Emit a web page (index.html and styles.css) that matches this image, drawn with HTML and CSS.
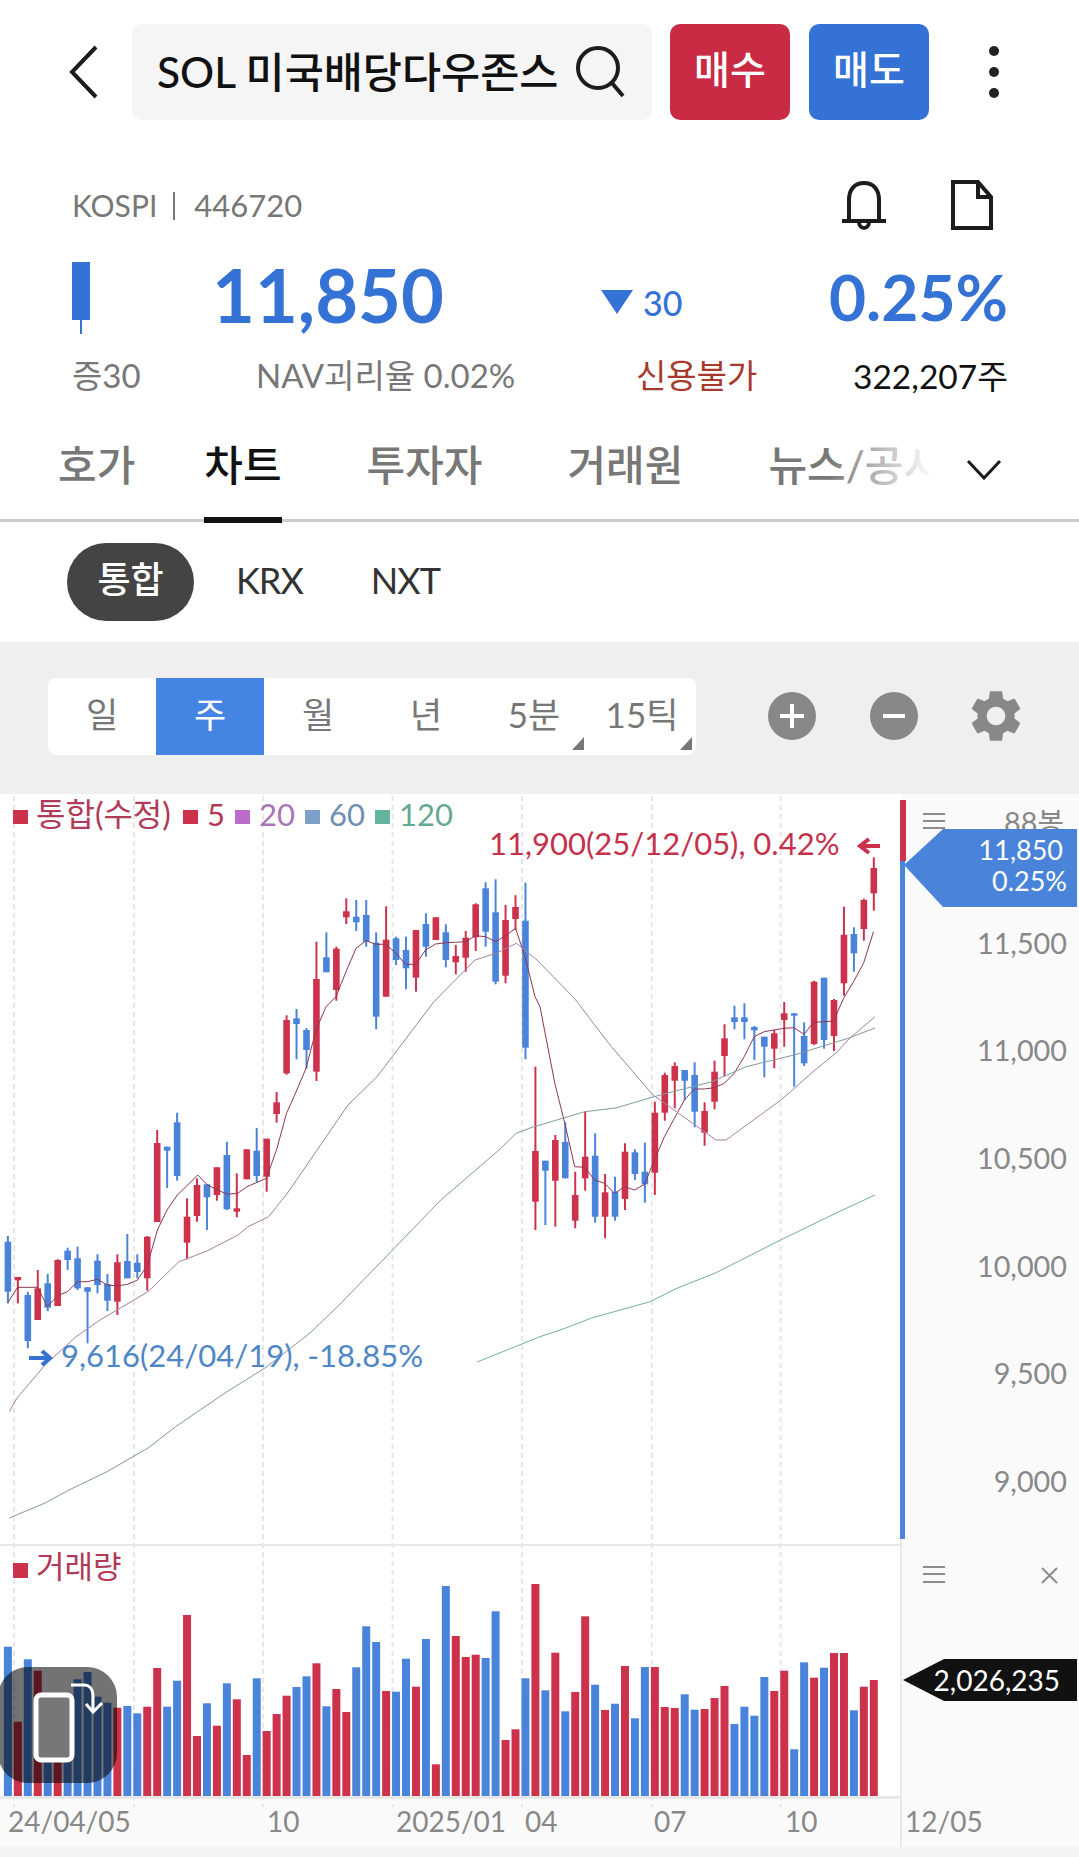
FILE: index.html
```html
<!DOCTYPE html>
<html lang="ko">
<head>
    <meta charset="UTF-8">
    <title>SOL 미국배당다우존스</title>
    <link rel="stylesheet" href="styles.css">
</head>
<body>

<div class="top">
    <svg class="back" width="32" height="56" viewBox="0 0 32 56"><path d="M28 3 L4 28 L28 53"/></svg>
    <div class="search">
        <span class="search-name">SOL 미국배당다우존스</span>
        <svg class="search-icon" width="52" height="56" viewBox="0 0 52 56"><circle cx="24" cy="24" r="20"/><path d="M38 39 L49 52"/></svg>
    </div>
    <a class="trade buy">매수</a>
    <a class="trade sell">매도</a>
    <div class="more"><i></i><i></i><i></i></div>
</div>

<div class="info">
    <div class="info-code">
        <span class="code">KOSPI<b></b><em>446720</em></span>
        <svg class="bell" width="50" height="50" viewBox="0 0 50 50"><path d="M10 41 V20 C10 9 16 3 25 3 C34 3 40 9 40 20 V41"/><path d="M3 41 H47"/><path d="M20 42 C20 50 30 50 30 42"/></svg>
        <svg class="doc" width="42" height="50" viewBox="0 0 42 50"><path d="M2 2 H27 L40 17 V48 H2 Z"/><path d="M27 2 V17 H40"/></svg>
    </div>
    <div class="info-price">
        <div class="mark"><i></i></div>
        <span class="price">11,850</span>
        <span class="diff"><i></i>30</span>
        <span class="rate">0.25%</span>
    </div>
    <div class="info-sub">
        <span class="sub-vol">증30</span>
        <span class="sub-nav">NAV괴리율 0.02%</span>
        <span class="sub-credit">신용불가</span>
        <span class="sub-qty">322,207주</span>
    </div>
</div>

<div class="tabs">
    <a class="tab">호가</a>
    <a class="tab on">차트</a>
    <a class="tab">투자자</a>
    <a class="tab">거래원</a>
    <a class="tab fade">뉴스/공시</a>
    <svg class="tab-more" width="36" height="22" viewBox="0 0 36 22"><path d="M2 2 L18 19 L34 2"/></svg>
</div>

<div class="market">
    <span class="market-on">통합</span>
    <span class="market-item">KRX</span>
    <span class="market-item">NXT</span>
</div>

<div class="period">
    <div class="period-list">
        <span>일</span>
        <span class="on">주</span>
        <span>월</span>
        <span>년</span>
        <span class="corner">5분</span>
        <span class="corner">15틱</span>
    </div>
    <svg class="tool" width="50" height="50" viewBox="0 0 50 50"><circle cx="25" cy="25" r="24"/><path d="M25 13 V37 M13 25 H37"/></svg>
    <svg class="tool" width="50" height="50" viewBox="0 0 50 50"><circle cx="25" cy="25" r="24"/><path d="M14 25 H36"/></svg>
    <svg class="gear" width="62" height="62" viewBox="0 0 24 24"><path d="M19.14 12.94c.04-.3.06-.61.06-.94 0-.32-.02-.64-.07-.94l2.03-1.58a.49.49 0 0 0 .12-.61l-1.92-3.32a.488.488 0 0 0-.59-.22l-2.39.96c-.5-.38-1.03-.7-1.62-.94l-.36-2.54a.484.484 0 0 0-.48-.41h-3.84c-.24 0-.43.17-.47.41l-.36 2.54c-.59.24-1.13.57-1.62.94l-2.39-.96c-.22-.08-.47 0-.59.22L2.74 8.87c-.12.21-.08.47.12.61l2.03 1.58c-.05.3-.09.63-.09.94s.02.64.07.94l-2.03 1.58a.49.49 0 0 0-.12.61l1.92 3.32c.12.22.37.29.59.22l2.39-.96c.5.38 1.03.7 1.62.94l.36 2.54c.05.24.24.41.48.41h3.84c.24 0 .44-.17.47-.41l.36-2.54c.59-.24 1.13-.56 1.62-.94l2.39.96c.22.08.47 0 .59-.22l1.92-3.32c.12-.22.07-.47-.12-.61l-2.01-1.58zM12 15.6c-1.98 0-3.6-1.62-3.6-3.6s1.62-3.6 3.6-3.6 3.6 1.62 3.6 3.6-1.62 3.6-3.6 3.6z"/></svg>
</div>

<svg class="chart" width="1079" height="1063" viewBox="0 794 1079 1063">
    <rect class="bg-plot" x="0" y="794" width="902" height="1002"/>
    <rect class="bg-axis" x="902" y="794" width="177" height="1053"/>
    <rect class="bg-axis" x="0" y="1798" width="902" height="49"/>
    <rect class="rule" x="0" y="1544" width="900" height="2"/>
    <rect class="rule" x="0" y="1796" width="900" height="3"/>
    <rect class="rule" x="900" y="1540" width="2" height="307"/>

    <g id="grid"></g>
    <g id="bars"></g>
    <g id="candles"></g>
    <g id="lines"></g>

    <!-- 가격 범례 -->
    <rect class="up" x="13" y="810" width="15" height="14"/>
    <text class="legend-ko c-red" x="36" y="826">통합(수정)</text>
    <rect class="up" x="183" y="810" width="15" height="14"/>
    <text class="legend c-red" x="207" y="826">5</text>
    <rect class="s-purple" x="235" y="810" width="15" height="14"/>
    <text class="legend c-purple" x="259" y="826">20</text>
    <rect class="s-blue" x="305" y="810" width="15" height="14"/>
    <text class="legend c-blue" x="329" y="826">60</text>
    <rect class="s-green" x="375" y="810" width="15" height="14"/>
    <text class="legend c-green" x="399" y="826">120</text>

    <text class="note c-high" x="489" y="855">11,900(25/12/05), 0.42%</text>
    <path class="arrow-high" d="M880 846 H860 M869 839 L860 846 L869 853"/>
    <path class="arrow-low" d="M29 1358 H50 M42 1351 L50 1358 L42 1365"/>
    <text class="note c-low" x="61" y="1367">9,616(24/04/19), -18.85%</text>

    <rect class="up" x="13" y="1563" width="15" height="15"/>
    <text class="legend c-red" x="36" y="1578">거래량</text>

    <!-- 오른쪽 축 -->
    <rect class="up" x="900" y="800" width="6" height="61"/>
    <rect class="down" x="900" y="861" width="5" height="678"/>
    <path class="menu" d="M923 814 H945 M923 821 H945 M923 828 H945"/>
    <text class="axis-text" x="1064" y="833">88봉</text>
    <path class="down" d="M904 865 L943 829 H1077 V907 H943 Z"/>
    <text class="tag" x="1063" y="860">11,850</text>
    <text class="tag" x="1067" y="891">0.25%</text>

    <text class="axis-text" x="1067" y="954">11,500</text>
    <text class="axis-text" x="1067" y="1061">11,000</text>
    <text class="axis-text" x="1067" y="1169">10,500</text>
    <text class="axis-text" x="1067" y="1277">10,000</text>
    <text class="axis-text" x="1067" y="1384">9,500</text>
    <text class="axis-text" x="1067" y="1492">9,000</text>

    <path class="menu" d="M923 1567 H945 M923 1574 H945 M923 1582 H945"/>
    <path class="menu" d="M1042 1568 L1057 1583 M1057 1568 L1042 1583"/>
    <path class="tag-black" d="M903 1680 L944 1659 H1077 V1701 H944 Z"/>
    <text class="tag-vol" x="1060" y="1691">2,026,235</text>

    <!-- 날짜 -->
    <text class="date" x="8" y="1832">24/04/05</text>
    <text class="date" x="267" y="1832">10</text>
    <text class="date" x="396" y="1832">2025/01</text>
    <text class="date" x="525" y="1832">04</text>
    <text class="date" x="654" y="1832">07</text>
    <text class="date" x="785" y="1832">10</text>
    <text class="date" x="905" y="1832">12/05</text>

    <!-- 화면 회전 버튼 -->
    <rect class="rotate" x="-2" y="1667" width="119" height="116" rx="30"/>
    <rect class="rotate-phone" x="36" y="1695" width="36" height="65" rx="5"/>
    <path class="rotate-arrow" d="M71 1685 H84 C90 1685 93 1690 93 1696 V1712 M86 1704 L93 1712 L102 1703"/>
</svg>

<script src="chart.js"></script>
</body>
</html>
```

FILE: styles.css
```css
html,body,div,span,a{margin:0;padding:0;}
body {
    width: 1079px;
    height: 1857px;
    overflow: hidden;
    background: #f4f4f4;
    font-family: Lato, "Noto Sans CJK KR", sans-serif;
    color: #111;
}
svg {
    display: block;
}
.back path, .search-icon circle, .search-icon path, .bell path, .doc path, .tab-more path {
    fill: none;
    stroke: #1c1c1c;
    stroke-width: 4;
}
.tab-more path {
    stroke-width: 3;
}

/* top bar */
.top {
    display: flex;
    align-items: center;
    height: 96px;
    padding-top: 24px;
    background: #fff;
}
.back {
    margin-left: 68px;
}
.search {
    display: flex;
    align-items: center;
    justify-content: space-between;
    box-sizing: border-box;
    width: 520px;
    height: 96px;
    margin-left: 32px;
    padding: 0 26px 0 25px;
    border-radius: 10px;
    background: #f5f5f5;
}
.search-name {
    margin-bottom: 6px;
    font-size: 42.5px;
    font-weight: 500;
    white-space: nowrap;
    color: #111;
}
.trade {
    width: 120px;
    height: 96px;
    line-height: 90px;
    text-align: center;
    border-radius: 10px;
    color: #fff;
    font-size: 39px;
    font-weight: 500;
}
.buy {
    margin-left: 18px;
    background: #c92a44;
}
.sell {
    margin-left: 19px;
    background: #3572d6;
}
.more {
    margin-left: 60px;
}
.more i {
    display: block;
    width: 10px;
    height: 10px;
    margin: 11px 0;
    border-radius: 5px;
    background: #222;
}

/* stock info */
.info {
    box-sizing: border-box;
    height: 293px;
    padding: 60px 71px 0 72px;
    background: #fff;
}
.info-code {
    display: flex;
    align-items: center;
    height: 50px;
}
.code {
    flex: 1;
    font-size: 30px;
    color: #777;
}
.code em {
    font-style: normal;
    font-size: 31px;
}
.code b {
    display: inline-block;
    width: 2px;
    height: 28px;
    margin: 0 19px 0 16px;
    vertical-align: -3px;
    background: #777;
}
.bell {
    margin-right: 62px;
}
.doc {
    margin-right: 15px;
}
.info-price {
    display: flex;
    align-items: center;
    height: 72px;
    margin-top: 28px;
}
.mark {
    position: relative;
    width: 18px;
    height: 58px;
    margin: -6px 0 0;
    background: #3572d6;
}
.mark i {
    position: absolute;
    left: 8px;
    top: 58px;
    width: 2px;
    height: 14px;
    background: #3572d6;
}
.price {
    width: 389px;
    margin-left: 122px;
    font-size: 74px;
    font-weight: 700;
    color: #3572d6;
}
.diff {
    width: 220px;
    margin-top: 16px;
    font-size: 34px;
    font-weight: 500;
    color: #3572d6;
}
.diff i {
    display: inline-block;
    width: 0;
    height: 0;
    margin-right: 10px;
    border-left: 16px solid transparent;
    border-right: 16px solid transparent;
    border-top: 24px solid #3572d6;
    vertical-align: 2px;
}
.rate {
    flex: 1;
    margin-top: 4px;
    text-align: right;
    font-size: 64px;
    font-weight: 700;
    color: #3572d6;
}
.info-sub {
    display: flex;
    align-items: center;
    height: 44px;
    margin-top: 22px;
    font-size: 33px;
    white-space: nowrap;
}
.sub-vol {
    width: 184px;
    color: #777;
}
.sub-nav {
    width: 380px;
    color: #777;
}
.sub-credit {
    flex: 1;
    color: #a63a2e;
}
.sub-qty {
    color: #111;
    font-size: 33.5px;
}

/* tabs */
.tabs {
    position: relative;
    display: flex;
    align-items: center;
    height: 109px;
    padding: 0 0 8px 58px;
    border-bottom: 3px solid #ccc;
    box-sizing: border-box;
    background: #fff;
    white-space: nowrap;
    font-size: 42px;
    color: #777;
    font-weight: 500;
}
.tab {
    position: relative;
    margin-right: 85px;
}
.tab:first-child {
    margin-right: 69px;
}
.tab.on {
    color: #111;
}
.tab.on:after {
    content: "";
    position: absolute;
    left: 0;
    right: 0;
    top: 85px;
    height: 6px;
    background: #111;
}
.tab.fade {
    width: 166px;
    overflow: hidden;
    margin: 0;
}
.tab.fade:after {
    content: "";
    position: absolute;
    left: 60px;
    top: 0;
    width: 106px;
    height: 100%;
    background: linear-gradient(to right, rgba(255,255,255,0), #fff);
}
.tab-more {
    position: absolute;
    left: 966px;
    top: 46px;
}

/* market switch */
.market {
    display: flex;
    align-items: center;
    height: 120px;
    padding-left: 67px;
    background: #fff;
    font-size: 36px;
    color: #333;
}
.market-on {
    width: 127px;
    height: 78px;
    line-height: 72px;
    text-align: center;
    border-radius: 39px;
    background: #444;
    color: #fff;
    font-size: 36px;
    font-weight: 500;
}
.market-item {
    margin: 0 26px 4px 42px;
    letter-spacing: -1px;
}

/* period bar */
.period {
    display: flex;
    align-items: center;
    box-sizing: border-box;
    height: 152px;
    padding: 0 0 4px 48px;
    background: #efefef;
}
.period-list {
    display: flex;
    height: 77px;
    border-radius: 8px;
    overflow: hidden;
    background: #fff;
    font-size: 35px;
    color: #777;
}
.period-list span {
    position: relative;
    width: 108px;
    line-height: 72px;
    text-align: center;
}
.period-list .on {
    background: #4485e3;
    color: #fff;
}
.period-list .corner:after {
    content: "";
    position: absolute;
    right: 4px;
    bottom: 5px;
    width: 0;
    height: 0;
    border-left: 12px solid transparent;
    border-bottom: 13px solid #777;
}
.tool circle {
    fill: #888;
}
.tool path {
    fill: none;
    stroke: #fff;
    stroke-width: 4;
}
.tool {
    margin-right: 52px;
}
.tool:nth-child(2) {
    margin-left: 71px;
}
.gear {
    margin-left: -6px;
    fill: #888;
}

/* chart */
.bg-plot {
    fill: #fff;
}
.bg-axis {
    fill: #fafafa;
}
.rule {
    fill: #e8e8e8;
}
.gridline {
    stroke: #e6e6e6;
    stroke-width: 2;
    stroke-dasharray: 5 4;
}
.up {
    fill: #cd324c;
}
.down {
    fill: #4a84da;
}
.wick-up {
    stroke: #cd324c;
    stroke-width: 2;
}
.wick-down {
    stroke: #4a84da;
    stroke-width: 2;
}
.ma {
    fill: none;
    stroke-width: 1;
}
.ma5 {
    stroke: #8f3550;
}
.ma20 {
    stroke: #a5809f;
}
.ma60 {
    stroke: #7f9a9f;
}
.ma120 {
    stroke: #74ae9c;
}
.legend {
    font-size: 31px;
}
.legend-ko {
    font-size: 32px;
}
.note {
    font-size: 31px;
}
.c-red {
    fill: #b03a58;
}
.c-purple {
    fill: #a875b8;
}
.c-blue {
    fill: #6f8fb5;
}
.c-green {
    fill: #63a892;
}
.c-high {
    fill: #c5314b;
}
.c-low {
    fill: #4f86c6;
}
.s-purple {
    fill: #bb6bc9;
}
.s-blue {
    fill: #7da0c8;
}
.s-green {
    fill: #63b39f;
}
.arrow-high, .arrow-low {
    fill: none;
    stroke-width: 4;
}
.arrow-high {
    stroke: #cd324c;
}
.arrow-low {
    stroke: #3572d6;
}
.axis-text {
    font-size: 28.8px;
    fill: #888;
    text-anchor: end;
}
.menu {
    fill: none;
    stroke: #8c8c8c;
    stroke-width: 2;
}
.tag {
    font-size: 27px;
    fill: #fff;
    text-anchor: end;
}
.tag-vol {
    font-size: 28px;
    fill: #fff;
    text-anchor: end;
}
.tag-black {
    fill: #111;
}
.date {
    font-size: 28px;
    fill: #888;
}
.rotate {
    fill: rgba(0,0,0,0.55);
}
.rotate-phone {
    fill: #777;
    stroke: #fff;
    stroke-width: 5;
}
.rotate-arrow {
    fill: none;
    stroke: #fff;
    stroke-width: 3;
}
```

FILE: chart.js
```js
window.onload = function () {
    var NS = 'http://www.w3.org/2000/svg';
    var BASE = 1796;

    // 양봉여부, 몸통 위/아래, 꼬리 위/아래, 거래량 top (화면 y좌표)
    var data = [
        [0,1241.7,1291.7,1236,1303.3,1646.7],[1,1277,1280.3,1277,1303.3,1721.7],[0,1295,1341,1291.7,1348.3,1659.3],[1,1288.3,1320,1270,1320,1670.7],
        [0,1283.3,1307.7,1274,1311,1707],[1,1260,1306,1259.3,1306,1713],[0,1250.7,1260,1247.7,1270,1700],[0,1258.3,1288.3,1246.7,1290,1679.3],
        [0,1287.3,1291.7,1287.3,1343.3,1672],[0,1260.7,1285,1254.3,1293.3,1696.7],[0,1284,1300.7,1274,1311,1702.7],[1,1262.3,1301.7,1254.3,1315,1707.7],
        [0,1261,1278.3,1234,1278.3,1706],[0,1262.7,1272,1254.3,1278.3,1713.3],[1,1236.7,1278.3,1236,1290.7,1706.7],[1,1143,1222,1130,1222,1668],
        [0,1146.7,1150.7,1146.7,1188,1706.7],[0,1122.3,1176,1112.7,1180.7,1680.7],[1,1216.7,1242.7,1198.3,1259.3,1615],[1,1185,1216,1178.3,1221.7,1736],
        [0,1184.3,1197.3,1184.3,1230,1703.3],[1,1167.3,1195,1167.3,1200.7,1725.7],[0,1155,1209.3,1141.7,1210,1683.3],[1,1208.3,1211.7,1173.3,1217.3,1699.3],
        [1,1149.3,1179.3,1149.3,1179.3,1755],[0,1150.7,1176,1128,1182,1678.3],[1,1138.7,1176.7,1138.7,1191.7,1731],[1,1102.3,1114,1092,1122.7,1714],
        [1,1020,1073.3,1015.3,1074.7,1695.7],[0,1018.3,1024,1009,1059.3,1687],[0,1030,1050,1028,1068.7,1676.3],[1,979,1071.7,941.7,1081,1663.3],
        [0,957.3,972.3,932.3,972.3,1706.3],[1,948.7,990,946.7,1000.7,1689],[1,911.3,917.3,898.3,924,1712],[0,916.7,922.3,900,931,1667.3],
        [0,915,941.7,900,946.7,1626.3],[0,942.7,1016.7,932.3,1029.3,1642],[1,939.7,996.7,906.3,996.7,1691],[0,938.3,960,936.7,965,1691.7],
        [0,950,968.3,936.7,989.3,1658.7],[1,930,977.7,930,991.7,1686.7],[0,924,946.7,913.3,956.7,1639],[1,917.3,940,917.3,940,1764.3],
        [0,932.3,960,924.3,967.3,1586],[1,956,962.3,945,974.3,1636],[1,937.7,957.7,931,971.7,1657],[1,904.3,937.3,903.3,951,1654.7],
        [0,888.3,931.7,882.3,946.7,1658],[0,912.3,981.7,879.3,984.3,1611.3],[1,920,975.7,905,983.3,1740],[1,907,919,895.3,930,1729.3],
        [0,920.7,1047.7,882.7,1059.3,1678.3],[1,1151,1201.7,1066.7,1230,1584],[0,1160.7,1170.7,1160.7,1225,1690.3],[1,1140,1180.7,1135,1226.7,1652.7],
        [0,1142,1178.3,1122.3,1178.3,1711.3],[1,1195,1220.7,1171.7,1228.3,1692],[1,1156.7,1178.3,1111.7,1190.7,1616.3],[0,1155.7,1216.7,1133.3,1222.7,1684.7],
        [1,1192.3,1216.7,1174,1238.3,1710],[0,1191.7,1216.7,1176.7,1220.7,1703.7],[1,1151.7,1199,1143.3,1210,1666],[0,1152.3,1174,1149.3,1180,1718.3],
        [0,1171.7,1184.3,1142.7,1202.7,1667],[1,1112.7,1172.7,1101.7,1195,1667],[1,1075,1112.7,1072.7,1120.7,1707],[1,1066,1080.7,1062.3,1108.3,1708],
        [0,1070,1080.7,1070,1100,1694.3],[0,1075,1111.7,1062.3,1127.3,1709.7],[1,1111,1132.7,1102.3,1145.7,1709],[1,1071.7,1101.7,1060.7,1109.3,1698],
        [1,1038.3,1056,1024.3,1076,1686],[0,1017.3,1022,1005.7,1029.3,1724],[0,1017.3,1022,1003.3,1039.3,1706.7],[0,1027,1030.3,1026,1060,1715.7],
        [0,1036.7,1046.7,1036.7,1077.3,1677],[1,1033.3,1048.7,1030,1068.3,1691],[1,1013.3,1020,1002,1046.7,1670.7],[0,1013.3,1015.7,1013.3,1086.7,1749.3],
        [0,1036,1063.3,1022.3,1066,1662.3],[1,981.7,1044,980.7,1045,1677.7],[0,977.7,1040,977.7,1048.7,1667.7],[1,1000,1036,999,1051,1653],
        [1,934.7,983.3,906.7,995.7,1653],[0,934,953.3,927.3,971.7,1710.3],[1,900,929,898.7,940.7,1686.7],[1,868,893.3,857.3,910.7,1680]
    ];

    var ma5 = '7.6,1303 17.6,1287.3 37.5,1287.3 47.5,1306.7 57.5,1295.7 67.5,1291.7 77.5,1281.7 87.5,1281.7 97.5,1279.3 107.5,1285 117.5,1286 127.5,1284.3 137.5,1280 147.4,1265 157.4,1230 167,1210 177.3,1195 187.7,1185 197.7,1175 207.6,1185 217.6,1190 227.3,1194.3 237.6,1193.3 247,1186.7 266.5,1178.3 277,1148.3 286.5,1113.3 296,1092 306,1068.3 316,1030 326,1006.7 336,996.7 346,971.7 356,948.3 366,940.7 376,944.3 386,944.3 396,953.3 405.6,964.3 415.6,964.3 425.6,950 435.6,944 445.6,942.7 455.6,942.3 465.6,941.7 475.6,935.7 485.6,936.7 495.6,941.7 505.5,935.7 515.5,928.3 525,956.7 535,996.7 540,1006.7 554.8,1083.3 564.8,1123.3 574.7,1166.7 584.7,1167.3 594.7,1180 604.6,1183.3 614.6,1193.3 624.6,1186.7 634.5,1190 644.5,1184.3 654.5,1160 664.4,1136.7 674.4,1118.3 684.4,1100 694.3,1089 704.3,1089 714.3,1087.7 724.3,1083.3 734.2,1073.3 744.2,1056.7 754.2,1036.7 764.1,1031.7 774,1030 784,1028.3 794,1027.7 804,1034.3 813.6,1022.3 823.6,1021.7 833.6,1021 843.6,998.3 853.5,981.7 863.5,963.3 873.5,931.7';
    var ma20 = '9.3,1411.7 17,1398 45,1365 76,1336.7 100,1320 148,1291.7 179,1261.7 207,1251 238,1235 248,1226.7 268.6,1216.7 286,1195 291,1188 348,1105 377,1076.7 434,1001.7 475,960 496,953.3 516.5,943.3 537,960 574.4,998.3 610,1045 653,1095 716,1140 726,1140 781,1100 815,1070 836,1053 850,1038 875,1016.7';
    var ma60 = '9.3,1518 45,1503 69,1490 107,1471.7 148,1448 175.6,1426.7 227,1391.7 265,1368 310,1333 337.5,1306.7 392.6,1250 440.8,1200 499,1150 516.5,1133 533.8,1126.7 540,1125 584.7,1111.7 615.6,1108 660,1095 712,1081.7 746,1066.7 794,1055 849,1038 875,1028';
    var ma120 = '477,1362 540,1336.7 565.8,1328 591.6,1318 650,1301.7 677.5,1288 715.3,1273 780.6,1240 842.5,1210 875,1195';

    var grid = [14, 134, 263, 392.6, 522, 651.7, 780.6];

    function add(parent, name, attrs) {
        var el = document.createElementNS(NS, name);
        for (var key in attrs) {
            el.setAttribute(key, attrs[key]);
        }
        document.getElementById(parent).appendChild(el);
    }

    for (var g = 0; g < grid.length; g++) {
        add('grid', 'line', {'class': 'gridline', x1: grid[g], x2: grid[g], y1: 796, y2: 1807});
    }

    for (var i = 0; i < data.length; i++) {
        var d = data[i];
        var x = 7.9 + 9.953 * i;
        var side = d[0] ? 'up' : 'down';
        add('bars', 'rect', {'class': side, x: x - 4, y: d[5], width: 8, height: BASE - d[5]});
        add('candles', 'line', {'class': 'wick-' + side, x1: x, x2: x, y1: d[3], y2: d[4]});
        add('candles', 'rect', {'class': side, x: x - 3.3, y: d[1], width: 6.6, height: d[2] - d[1]});
    }

    add('lines', 'polyline', {'class': 'ma ma5', points: ma5});
    add('lines', 'polyline', {'class': 'ma ma20', points: ma20});
    add('lines', 'polyline', {'class': 'ma ma60', points: ma60});
    add('lines', 'polyline', {'class': 'ma ma120', points: ma120});
};
```
